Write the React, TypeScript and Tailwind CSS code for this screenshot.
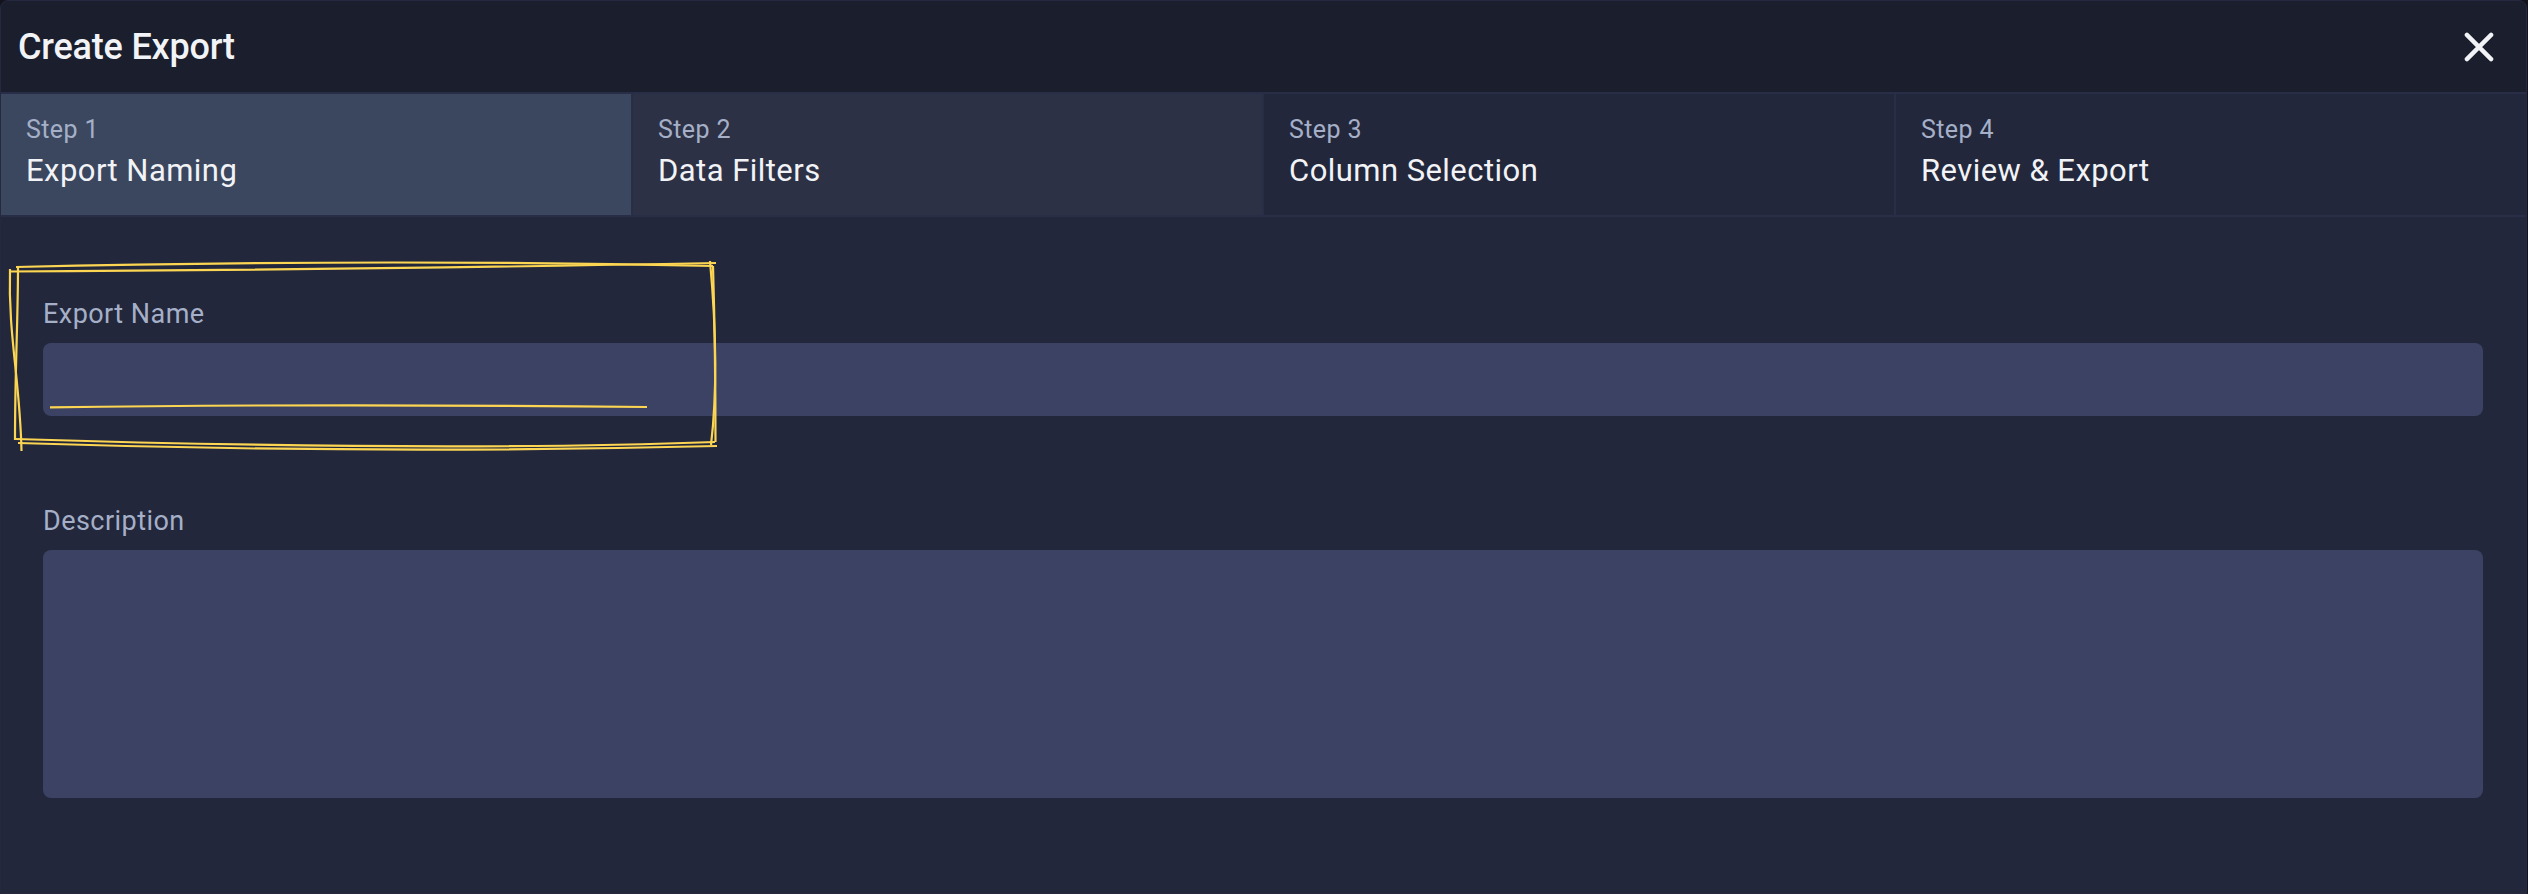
const steps = [
  { id: 1, name: 'Export Naming', style: 'w-[632px] border-r-2 bg-[#3b475f]' },
  { id: 2, name: 'Data Filters', style: 'w-[631px] border-r-2 bg-[#2d3145]' },
  { id: 3, name: 'Column Selection', style: 'w-[632px] border-r-2 bg-[#22273b]' },
  { id: 4, name: 'Review & Export', style: 'flex-1 bg-[#22273b]' },
];

function Header() {
  return (
    <header className="flex h-[93px] shrink-0 items-center justify-between border-b-2 border-[#282d48] bg-[#1b1e2c] pl-[17px] pr-[32px] pt-px">
      <h1 className="text-[36px] font-medium leading-[42px] tracking-[-0.2px]">Create Export</h1>
      <button aria-label="Close" className="flex">
        <svg width="30" height="30" viewBox="0 0 30 30" fill="none" stroke="#f2f3f7" strokeWidth="4.4" strokeLinecap="round">
          <path d="M2.900 2.900 27.100 27.100M27.100 2.900 2.900 27.100" />
        </svg>
      </button>
    </header>
  );
}

function Steps() {
  return (
    <nav className="flex h-[123px] shrink-0 border-b-2 border-[#282d48]">
      {steps.map((step) => (
        <div key={step.id} className={`flex flex-col border-[#282d48] pl-[25px] pt-[21px] ${step.style}`}>
          <span className="text-[25px] leading-[30px] tracking-[0.4px] text-[#a5b0c8]">Step {step.id}</span>
          <span className="mt-[7px] text-[31px] leading-[38px] tracking-[0.45px]">{step.name}</span>
        </div>
      ))}
    </nav>
  );
}

function Sketch() {
  return (
    <svg className="pointer-events-none absolute -left-px -top-px" width="740" height="470" fill="none" stroke="#fcd653" strokeWidth="2.2">
      <path d="M16 267Q380 258.500 713 266" />
      <path d="M10 271.500Q340 270 716 263" />
      <path d="M710 261Q720 370 711 445" />
      <path d="M713 266Q715.500 350 715.500 442" />
      <path d="M15 439Q440 452 715 442" />
      <path d="M18 443Q370 454.500 717 446" />
      <path d="M10 269C8 335 20 380 21.500 451" />
      <path d="M18 267C18 320 15 370 15 440" />
      <path d="M50 407.300Q330 403.500 647 407" />
    </svg>
  );
}

export default function App() {
  return (
    <div className="h-[894px] w-[2528px] bg-[#12131d] pr-px font-['Roboto',sans-serif] text-[#f2f3f7]">
      <div className="relative flex h-[894px] flex-col overflow-hidden rounded-t-[8px] border border-[#25283e] bg-[#22273b]">
        <Header />
        <Steps />
        <main className="flex flex-col pl-[42px] pr-[43px] pt-[81px]">
          <label htmlFor="name" className="text-[27px] leading-[32px] tracking-[0.45px] text-[#a5b0c8]">Export Name</label>
          <input id="name" className="mt-[13px] h-[72.500px] rounded-[8px] bg-[#3c4263] px-4 outline-none" />
          <label htmlFor="description" className="mt-[89px] text-[27px] leading-[32px] tracking-[0.45px] text-[#a5b0c8]">Description</label>
          <textarea id="description" className="mt-[13px] h-[248.500px] resize-none rounded-[8px] bg-[#3c4263] p-4 outline-none" />
        </main>
        <Sketch />
      </div>
    </div>
  );
}
